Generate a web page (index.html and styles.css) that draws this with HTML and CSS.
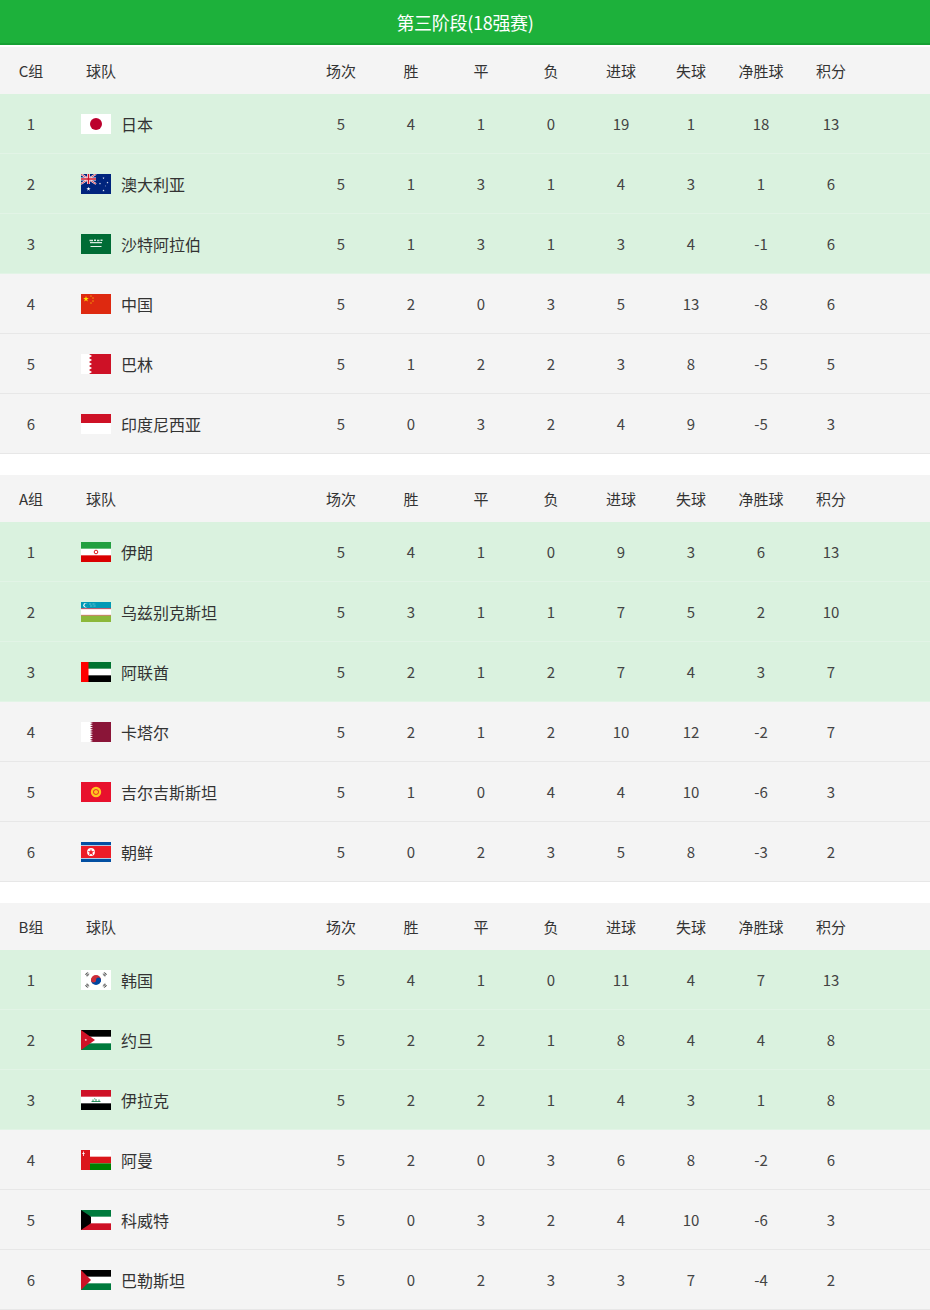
FILE: index.html
```html
<!DOCTYPE html>
<html lang="zh-CN">
<head>
<meta charset="utf-8">
<title>第三阶段(18强赛)</title>
<link rel="stylesheet" href="styles.css">
</head>
<body>
<svg class="defs" width="0" height="0" aria-hidden="true">
  <defs>
    <polygon id="star" points="0,-1 0.225,-0.309 0.951,-0.309 0.363,0.118 0.588,0.809 0,0.382 -0.588,0.809 -0.363,0.118 -0.951,-0.309 -0.225,-0.309"/>
  </defs>
</svg>

<div class="title">第三阶段(18强赛)</div>

<section class="group">
  <div class="row head"><div>C组</div><div class="team">球队</div><div>场次</div><div>胜</div><div>平</div><div>负</div><div>进球</div><div>失球</div><div>净胜球</div><div>积分</div></div>

  <div class="row top"><div>1</div><div class="team">
    <svg class="flag" viewBox="0 0 30 20"><rect width="30" height="20" fill="#fff"/><circle cx="15" cy="10" r="6" fill="#bc002d"/></svg>日本</div>
    <div>5</div><div>4</div><div>1</div><div>0</div><div>19</div><div>1</div><div>18</div><div>13</div></div>

  <div class="row top"><div>2</div><div class="team">
    <svg class="flag" viewBox="0 0 30 20"><rect width="30" height="20" fill="#00247d"/>
      <path d="M0 0L15 10M15 0L0 10" stroke="#fff" stroke-width="2"/>
      <path d="M0 0L15 10M15 0L0 10" stroke="#cf142b" stroke-width="0.8"/>
      <path d="M7.5 0V10M0 5H15" stroke="#fff" stroke-width="3"/>
      <path d="M7.5 0V10M0 5H15" stroke="#cf142b" stroke-width="1.6"/>
      <use href="#star" fill="#fff" transform="translate(7.5 15) scale(2.2)"/>
      <use href="#star" fill="#fff" transform="translate(22.5 4) scale(1.1)"/>
      <use href="#star" fill="#fff" transform="translate(26.5 8.5) scale(1.1)"/>
      <use href="#star" fill="#fff" transform="translate(19 9.5) scale(1.1)"/>
      <use href="#star" fill="#fff" transform="translate(22.5 16.5) scale(1.2)"/>
      <use href="#star" fill="#fff" transform="translate(24.5 12) scale(0.6)"/>
    </svg>澳大利亚</div>
    <div>5</div><div>1</div><div>3</div><div>1</div><div>4</div><div>3</div><div>1</div><div>6</div></div>

  <div class="row top"><div>3</div><div class="team">
    <svg class="flag" viewBox="0 0 30 20"><rect width="30" height="20" fill="#006c35"/>
      <path d="M8.5 6.5h3.5M13 6.2h2M16 6.5h2.5M19.5 6.2h2M9 8.6h12" stroke="#fff" stroke-width="1.4" opacity="0.85"/>
      <path d="M9.5 12.5h11" stroke="#fff" stroke-width="0.9"/>
    </svg>沙特阿拉伯</div>
    <div>5</div><div>1</div><div>3</div><div>1</div><div>3</div><div>4</div><div>-1</div><div>6</div></div>

  <div class="row"><div>4</div><div class="team">
    <svg class="flag" viewBox="0 0 30 20"><rect width="30" height="20" fill="#de2910"/>
      <use href="#star" fill="#ffde00" transform="translate(5 5) scale(3)"/>
      <use href="#star" fill="#ffde00" transform="translate(10 2) scale(1)"/>
      <use href="#star" fill="#ffde00" transform="translate(12 4) scale(1)"/>
      <use href="#star" fill="#ffde00" transform="translate(12 7) scale(1)"/>
      <use href="#star" fill="#ffde00" transform="translate(10 9) scale(1)"/>
    </svg>中国</div>
    <div>5</div><div>2</div><div>0</div><div>3</div><div>5</div><div>13</div><div>-8</div><div>6</div></div>

  <div class="row"><div>5</div><div class="team">
    <svg class="flag" viewBox="0 0 30 20"><rect width="30" height="20" fill="#fff"/>
      <path d="M8 0H30V20H8L11 18L8 16L11 14L8 12L11 10L8 8L11 6L8 4L11 2Z" fill="#ce1126"/>
    </svg>巴林</div>
    <div>5</div><div>1</div><div>2</div><div>2</div><div>3</div><div>8</div><div>-5</div><div>5</div></div>

  <div class="row"><div>6</div><div class="team">
    <svg class="flag" viewBox="0 0 30 20"><rect width="30" height="20" fill="#fff"/><rect width="30" height="9" fill="#ce1126"/></svg>印度尼西亚</div>
    <div>5</div><div>0</div><div>3</div><div>2</div><div>4</div><div>9</div><div>-5</div><div>3</div></div>
</section>

<section class="group">
  <div class="row head"><div>A组</div><div class="team">球队</div><div>场次</div><div>胜</div><div>平</div><div>负</div><div>进球</div><div>失球</div><div>净胜球</div><div>积分</div></div>

  <div class="row top"><div>1</div><div class="team">
    <svg class="flag" viewBox="0 0 30 20"><rect width="30" height="20" fill="#fff"/>
      <rect width="30" height="6.67" fill="#239f40"/><rect y="13.33" width="30" height="6.67" fill="#da0000"/>
      <circle cx="15" cy="10" r="1.8" fill="none" stroke="#da0000" stroke-width="0.9"/>
    </svg>伊朗</div>
    <div>5</div><div>4</div><div>1</div><div>0</div><div>9</div><div>3</div><div>6</div><div>13</div></div>

  <div class="row top"><div>2</div><div class="team">
    <svg class="flag" viewBox="0 0 30 20"><rect width="30" height="20" fill="#fff"/>
      <rect width="30" height="6.4" fill="#0099b5"/><rect y="6.4" width="30" height="0.7" fill="#ce1126"/>
      <rect y="12.9" width="30" height="0.7" fill="#ce1126"/><rect y="13.6" width="30" height="6.4" fill="#8cb83a"/>
      <circle cx="4.5" cy="3.2" r="2.2" fill="#fff"/><circle cx="5.4" cy="3.2" r="1.9" fill="#0099b5"/>
      <path d="M8 2h7M9 4h6" stroke="#fff" stroke-width="0.6" stroke-dasharray="0.6 0.8"/>
    </svg>乌兹别克斯坦</div>
    <div>5</div><div>3</div><div>1</div><div>1</div><div>7</div><div>5</div><div>2</div><div>10</div></div>

  <div class="row top"><div>3</div><div class="team">
    <svg class="flag" viewBox="0 0 30 20"><rect width="30" height="20" fill="#fff"/>
      <rect width="30" height="6.67" fill="#00732f"/><rect y="13.33" width="30" height="6.67" fill="#000"/>
      <rect width="7.5" height="20" fill="#ff0000"/>
    </svg>阿联酋</div>
    <div>5</div><div>2</div><div>1</div><div>2</div><div>7</div><div>4</div><div>3</div><div>7</div></div>

  <div class="row"><div>4</div><div class="team">
    <svg class="flag" viewBox="0 0 30 20"><rect width="30" height="20" fill="#fff"/>
      <path d="M9 0H30V20H9L12 18.9L9 17.8L12 16.7L9 15.6L12 14.4L9 13.3L12 12.2L9 11.1L12 10L9 8.9L12 7.8L9 6.7L12 5.6L9 4.4L12 3.3L9 2.2L12 1.1Z" fill="#8a1538"/>
    </svg>卡塔尔</div>
    <div>5</div><div>2</div><div>1</div><div>2</div><div>10</div><div>12</div><div>-2</div><div>7</div></div>

  <div class="row"><div>5</div><div class="team">
    <svg class="flag" viewBox="0 0 30 20"><rect width="30" height="20" fill="#e8112d"/>
      <circle cx="15" cy="10" r="5.2" fill="#ffc61e"/>
      <circle cx="15" cy="10" r="2.8" fill="#e8112d"/>
      <circle cx="15" cy="10" r="2.1" fill="#ffc61e"/>
    </svg>吉尔吉斯斯坦</div>
    <div>5</div><div>1</div><div>0</div><div>4</div><div>4</div><div>10</div><div>-6</div><div>3</div></div>

  <div class="row"><div>6</div><div class="team">
    <svg class="flag" viewBox="0 0 30 20"><rect width="30" height="20" fill="#fff"/>
      <rect width="30" height="3.3" fill="#024fa2"/><rect y="16.7" width="30" height="3.3" fill="#024fa2"/>
      <rect y="4" width="30" height="12" fill="#ed1c27"/>
      <circle cx="10" cy="10" r="3.9" fill="#fff"/>
      <use href="#star" fill="#ed1c27" transform="translate(10 10.3) scale(3.6)"/>
    </svg>朝鲜</div>
    <div>5</div><div>0</div><div>2</div><div>3</div><div>5</div><div>8</div><div>-3</div><div>2</div></div>
</section>

<section class="group">
  <div class="row head"><div>B组</div><div class="team">球队</div><div>场次</div><div>胜</div><div>平</div><div>负</div><div>进球</div><div>失球</div><div>净胜球</div><div>积分</div></div>

  <div class="row top"><div>1</div><div class="team">
    <svg class="flag" viewBox="0 0 30 20"><rect width="30" height="20" fill="#fff"/>
      <path d="M10 10A5 5 0 0 1 20 10Z" fill="#cd2e3a"/>
      <path d="M10 10A5 5 0 0 0 20 10Z" fill="#0047a0"/>
      <circle cx="12.5" cy="10" r="2.5" fill="#cd2e3a"/>
      <circle cx="17.5" cy="10" r="2.5" fill="#0047a0"/>
      <g stroke="#222" stroke-width="0.8">
        <path d="M4.2 4.6L6.6 2.4M5 5.5L7.4 3.3M5.8 6.4L8.2 4.2"/>
        <path d="M21.8 4.2L24.2 6.4M22.6 3.3L25 5.5M23.4 2.4L25.8 4.6"/>
        <path d="M4.2 15.4L6.6 17.6M5 14.5L7.4 16.7M5.8 13.6L8.2 15.8"/>
        <path d="M21.8 15.8L24.2 13.6M22.6 16.7L25 14.5M23.4 17.6L25.8 15.4"/>
      </g>
    </svg>韩国</div>
    <div>5</div><div>4</div><div>1</div><div>0</div><div>11</div><div>4</div><div>7</div><div>13</div></div>

  <div class="row top"><div>2</div><div class="team">
    <svg class="flag" viewBox="0 0 30 20"><rect width="30" height="20" fill="#fff"/>
      <rect width="30" height="6.67" fill="#000"/><rect y="13.33" width="30" height="6.67" fill="#007a3d"/>
      <path d="M0 0L14 10L0 20Z" fill="#ce1126"/>
      <use href="#star" fill="#fff" transform="translate(4.8 10) scale(1.3)"/>
    </svg>约旦</div>
    <div>5</div><div>2</div><div>2</div><div>1</div><div>8</div><div>4</div><div>4</div><div>8</div></div>

  <div class="row top"><div>3</div><div class="team">
    <svg class="flag" viewBox="0 0 30 20"><rect width="30" height="20" fill="#fff"/>
      <rect width="30" height="6.67" fill="#ce1126"/><rect y="13.33" width="30" height="6.67" fill="#000"/>
      <path d="M10.5 11.5h9M12 9.5v2M15 9v2.5M18 9.5v2M13.2 8.8h1" stroke="#007a3d" stroke-width="0.8"/>
    </svg>伊拉克</div>
    <div>5</div><div>2</div><div>2</div><div>1</div><div>4</div><div>3</div><div>1</div><div>8</div></div>

  <div class="row"><div>4</div><div class="team">
    <svg class="flag" viewBox="0 0 30 20"><rect width="30" height="20" fill="#fff"/>
      <rect y="6.67" width="30" height="6.67" fill="#db161b"/><rect y="13.33" width="30" height="6.67" fill="#008000"/>
      <rect width="9" height="20" fill="#db161b"/>
      <path d="M2.5 1.5V6M1.2 3.5h2.6" stroke="#fff" stroke-width="0.8"/>
    </svg>阿曼</div>
    <div>5</div><div>2</div><div>0</div><div>3</div><div>6</div><div>8</div><div>-2</div><div>6</div></div>

  <div class="row"><div>5</div><div class="team">
    <svg class="flag" viewBox="0 0 30 20"><rect width="30" height="20" fill="#fff"/>
      <rect width="30" height="6.67" fill="#007a3d"/><rect y="13.33" width="30" height="6.67" fill="#ce1126"/>
      <path d="M0 0L10 6.67V13.33L0 20Z" fill="#000"/>
    </svg>科威特</div>
    <div>5</div><div>0</div><div>3</div><div>2</div><div>4</div><div>10</div><div>-6</div><div>3</div></div>

  <div class="row"><div>6</div><div class="team">
    <svg class="flag" viewBox="0 0 30 20"><rect width="30" height="20" fill="#fff"/>
      <rect width="30" height="6.67" fill="#000"/><rect y="13.33" width="30" height="6.67" fill="#007a3d"/>
      <path d="M0 0L10 10L0 20Z" fill="#ce1126"/>
    </svg>巴勒斯坦</div>
    <div>5</div><div>0</div><div>2</div><div>3</div><div>3</div><div>7</div><div>-4</div><div>2</div></div>
</section>
</body>
</html>
```

FILE: styles.css
```css
html, body {
  margin: 0;
  padding: 0;
  background: #fff;
}

body {
  font-family: "Microsoft YaHei", "Noto Sans CJK SC", "Noto Sans", sans-serif;
  color: #3a3a3a;
  width: 930px;
}

.defs {
  position: absolute;
  width: 0;
  height: 0;
  overflow: hidden;
}

.title {
  height: 43px;
  background: #1db13b;
  border-bottom: 2px solid #16a033;
  margin-bottom: 2px;
  color: #fff;
  font-size: 18px;
  letter-spacing: -0.3px;
  display: flex;
  align-items: center;
  justify-content: center;
}

.group + .group {
  margin-top: 21px;
}

.row {
  display: grid;
  grid-template-columns: 62px 244px repeat(8, 70px) 1fr;
  align-items: center;
  height: 60px;
  box-sizing: border-box;
  border-bottom: 1px solid #e7e7e7;
  background: #f4f4f4;
  font-size: 15px;
  text-align: center;
  color: #444;
}

.row.head {
  height: 47px;
  border-bottom: none;
  font-size: 15px;
  color: #333;
}

.row.top {
  background: #daf2df;
  border-bottom-color: #e2f4e6;
}

.team {
  display: flex;
  align-items: center;
  gap: 10px;
  padding-left: 19px;
  text-align: left;
  font-size: 16px;
  color: #333;
}

.head .team {
  padding-left: 24px;
  font-size: 15px;
}

.flag {
  width: 30px;
  height: 20px;
  flex: none;
  display: block;
}
```
